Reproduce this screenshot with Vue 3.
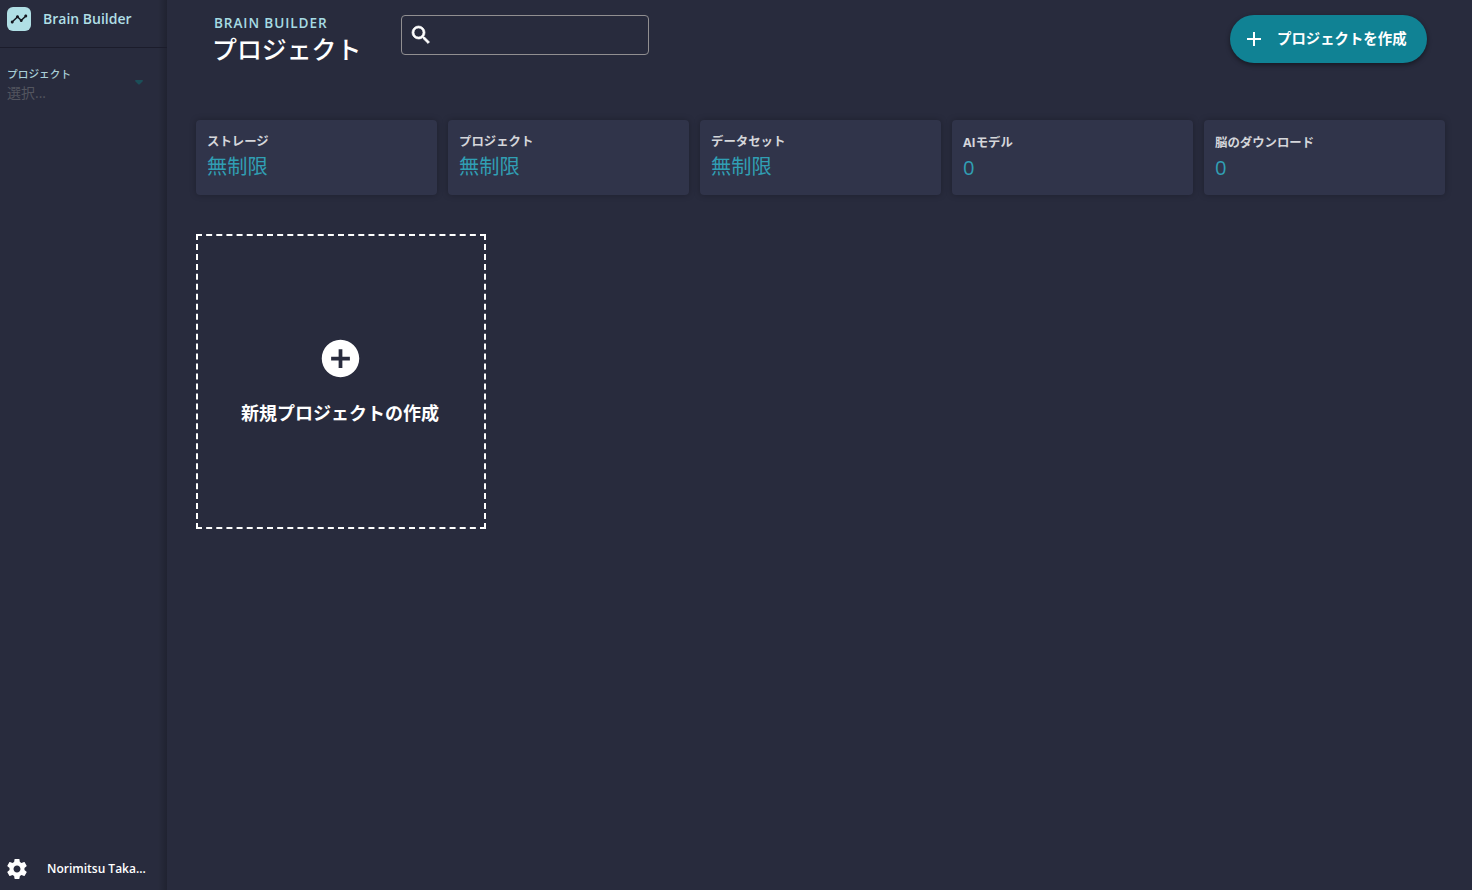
<script setup>
const stats = [
  { label: 'ストレージ', value: '無制限' },
  { label: 'プロジェクト', value: '無制限' },
  { label: 'データセット', value: '無制限' },
  { label: 'AIモデル', value: '0', latin: true },
  { label: '脳のダウンロード', value: '0', latin: true },
]
</script>

<template>
  <div class="app">
    <aside class="sidebar">
      <div class="brand">
        <span class="logo">
          <svg viewBox="0 0 24 24" width="18" height="18">
            <path d="M23 8c0 1.1-.9 2-2 2-.18 0-.35-.02-.51-.07l-3.56 3.55c.05.16.07.34.07.52 0 1.1-.9 2-2 2s-2-.9-2-2c0-.18.02-.36.07-.52l-2.55-2.55c-.16.05-.34.07-.52.07s-.36-.02-.52-.07l-4.55 4.56c.05.16.07.33.07.51 0 1.1-.9 2-2 2s-2-.9-2-2 .9-2 2-2c.18 0 .35.02.51.07l4.56-4.55C8.02 9.36 8 9.18 8 9c0-1.1.9-2 2-2s2 .9 2 2c0 .18-.02.36-.07.52l2.55 2.55c.16-.05.34-.07.52-.07s.36.02.52.07l3.55-3.56C19.02 8.35 19 8.18 19 8c0-1.1.9-2 2-2s2 .9 2 2z" />
          </svg>
        </span>
        <span class="brand-name">Brain Builder</span>
      </div>
      <div class="picker">
        <div>
          <div class="picker-label">プロジェクト</div>
          <div class="picker-value">選択...</div>
        </div>
        <svg class="caret" viewBox="0 0 8 5" width="8" height="5"><path d="M0 1Q0 0 1 0H7Q8 0 8 1L5 4Q4 5 3 4Z" /></svg>
      </div>
      <div class="user">
        <svg viewBox="0 0 24 24" width="24" height="24">
          <path d="M19.43 12.98c.04-.32.07-.64.07-.98s-.03-.66-.07-.98l2.11-1.65c.19-.15.24-.42.12-.64l-2-3.46c-.12-.22-.39-.3-.61-.22l-2.49 1c-.52-.4-1.08-.73-1.69-.98l-.38-2.65C14.46 2.18 14.25 2 14 2h-4c-.25 0-.46.18-.49.42l-.38 2.65c-.61.25-1.17.59-1.69.98l-2.49-1c-.23-.09-.49 0-.61.22l-2 3.46c-.13.22-.07.49.12.64l2.11 1.65c-.04.32-.07.65-.07.98s.03.66.07.98l-2.11 1.65c-.19.15-.24.42-.12.64l2 3.46c.12.22.39.3.61.22l2.49-1c.52.4 1.08.73 1.69.98l.38 2.65c.03.24.24.42.49.42h4c.25 0 .46-.18.49-.42l.38-2.65c.61-.25 1.17-.59 1.69-.98l2.49 1c.23.09.49 0 .61-.22l2-3.46c.12-.22.07-.49-.12-.64l-2.11-1.65zM12 15.5c-1.93 0-3.5-1.57-3.5-3.5s1.57-3.5 3.5-3.5 3.5 1.57 3.5 3.5-1.57 3.5-3.5 3.5z" />
        </svg>
        <span class="user-name">Norimitsu Taka...</span>
      </div>
    </aside>

    <main class="main">
      <header class="header">
        <div class="titles">
          <div class="eyebrow">BRAIN BUILDER</div>
          <h1>プロジェクト</h1>
        </div>
        <div class="search">
          <svg viewBox="0 0 24 24" width="24" height="24">
            <path d="M15.5 14h-.79l-.28-.27A6.47 6.47 0 0 0 16 9.5 6.5 6.5 0 1 0 9.5 16c1.61 0 3.09-.59 4.23-1.57l.27.28v.79l5 4.99L20.49 19l-4.99-5zm-6 0C7.01 14 5 11.99 5 9.5S7.01 5 9.5 5 14 7.01 14 9.5 11.99 14 9.5 14z" />
          </svg>
        </div>
        <button class="create">
          <svg viewBox="0 0 24 24" width="24" height="24"><path d="M19 13h-6v6h-2v-6H5v-2h6V5h2v6h6v2z" /></svg>
          <span>プロジェクトを作成</span>
        </button>
      </header>

      <section class="stats">
        <div v-for="s in stats" :key="s.label" class="stat" :class="{ latin: s.latin }">
          <div class="stat-label">{{ s.label }}</div>
          <div class="stat-value">{{ s.value }}</div>
        </div>
      </section>

      <div class="new-project">
        <svg viewBox="0 0 24 24" width="45" height="45">
          <path d="M12 2C6.48 2 2 6.48 2 12s4.48 10 10 10 10-4.48 10-10S17.52 2 12 2zm5 11h-4v4h-2v-4H7v-2h4V7h2v4h4v2z" />
        </svg>
        <span>新規プロジェクトの作成</span>
      </div>
    </main>
  </div>
</template>

<style>
body {
  background: #282b3d;
}
</style>

<style scoped>
* {
  box-sizing: border-box;
}
.app {
  display: flex;
  height: 890px;
  overflow: hidden;
  background: #282b3d;
  color: #fff;
  font-family: "Open Sans", "Noto Sans CJK JP", sans-serif;
}
svg {
  display: block;
  flex: none;
  fill: currentColor;
}
.sidebar {
  display: flex;
  flex-direction: column;
  width: 167px;
  flex: none;
  background: linear-gradient(to right, transparent 158px, rgba(0, 0, 0, 0.2) 167px);
}
.brand {
  display: flex;
  gap: 12px;
  height: 48px;
  padding: 7px 7px 0;
  border-bottom: 1px solid #1b1c2b;
}
.logo {
  display: flex;
  align-items: center;
  justify-content: center;
  width: 24px;
  height: 24px;
  border-radius: 6px;
  background: #b0dfe5;
  color: #15161f;
}
.brand-name {
  color: #b0dfe5;
  font-size: 14px;
  font-weight: 600;
  line-height: 24px;
}
.picker {
  display: flex;
  justify-content: space-between;
  padding: 18px 24px 0 7px;
}
.picker-label {
  color: #a9cfd7;
  font-size: 10.7px;
  font-weight: 500;
  line-height: 16px;
}
.picker-value {
  color: #53555f;
  font-size: 14px;
  font-weight: 400;
  line-height: 22px;
}
.caret {
  margin-top: 14px;
  color: #1b4e58;
}
.user {
  display: flex;
  align-items: center;
  gap: 18px;
  margin-top: auto;
  padding: 0 0 9px 5px;
  font-size: 12px;
  font-weight: 600;
}
.user-name {
  padding-bottom: 2px;
}
.main {
  flex: 1;
  min-width: 0;
}
.header {
  display: flex;
  align-items: flex-start;
  height: 120px;
  padding: 15px 45px 0 47px;
}
.titles {
  width: 187px;
}
.eyebrow {
  color: #a6dbe4;
  font-size: 13.6px;
  font-weight: 600;
  line-height: 16px;
  letter-spacing: 0.9px;
}
h1 {
  margin: 0 0 0 -2px;
  font-size: 24.9px;
  font-weight: 500;
  line-height: 36px;
  white-space: nowrap;
}
.search {
  display: flex;
  align-items: center;
  width: 248px;
  height: 40px;
  padding: 0 7px;
  border: 1px solid #918f91;
  border-radius: 4px;
}
.search path {
  stroke: currentColor;
  stroke-width: 0.7px;
}
.create {
  display: flex;
  align-items: center;
  gap: 11px;
  width: 197px;
  height: 48px;
  margin-left: auto;
  padding: 0 0 0 12px;
  border: 0;
  border-radius: 24px;
  background: #108294;
  box-shadow: 0 2px 5px rgba(0, 0, 0, 0.45);
  color: #fff;
  font-family: inherit;
  font-size: 14.4px;
  font-weight: 700;
  white-space: nowrap;
}
.create span {
  padding-bottom: 3px;
}
.stats {
  display: grid;
  grid-template-columns: repeat(5, 241px);
  gap: 11px;
  padding-left: 29px;
}
.stat {
  height: 75px;
  padding: 12px 11px;
  border-radius: 4px;
  background: #30344a;
  box-shadow: 0 0 6px rgba(0, 0, 0, 0.25);
}
.stat.latin {
  padding-top: 13px;
}
.stat-label {
  color: #d5d6da;
  font-size: 12.4px;
  font-weight: 700;
  line-height: 19px;
}
.stat-value {
  color: #309fb4;
  font-size: 20.2px;
  font-weight: 400;
  line-height: 30px;
}
.new-project {
  display: flex;
  flex-direction: column;
  align-items: center;
  width: 290px;
  height: 295px;
  margin: 39px 0 0 29px;
  padding: 100px 2px 0 0;
  border: 2px dashed #fff;
  font-size: 18px;
  font-weight: 700;
}
.new-project span {
  margin-top: 19px;
  line-height: 26px;
}
</style>
